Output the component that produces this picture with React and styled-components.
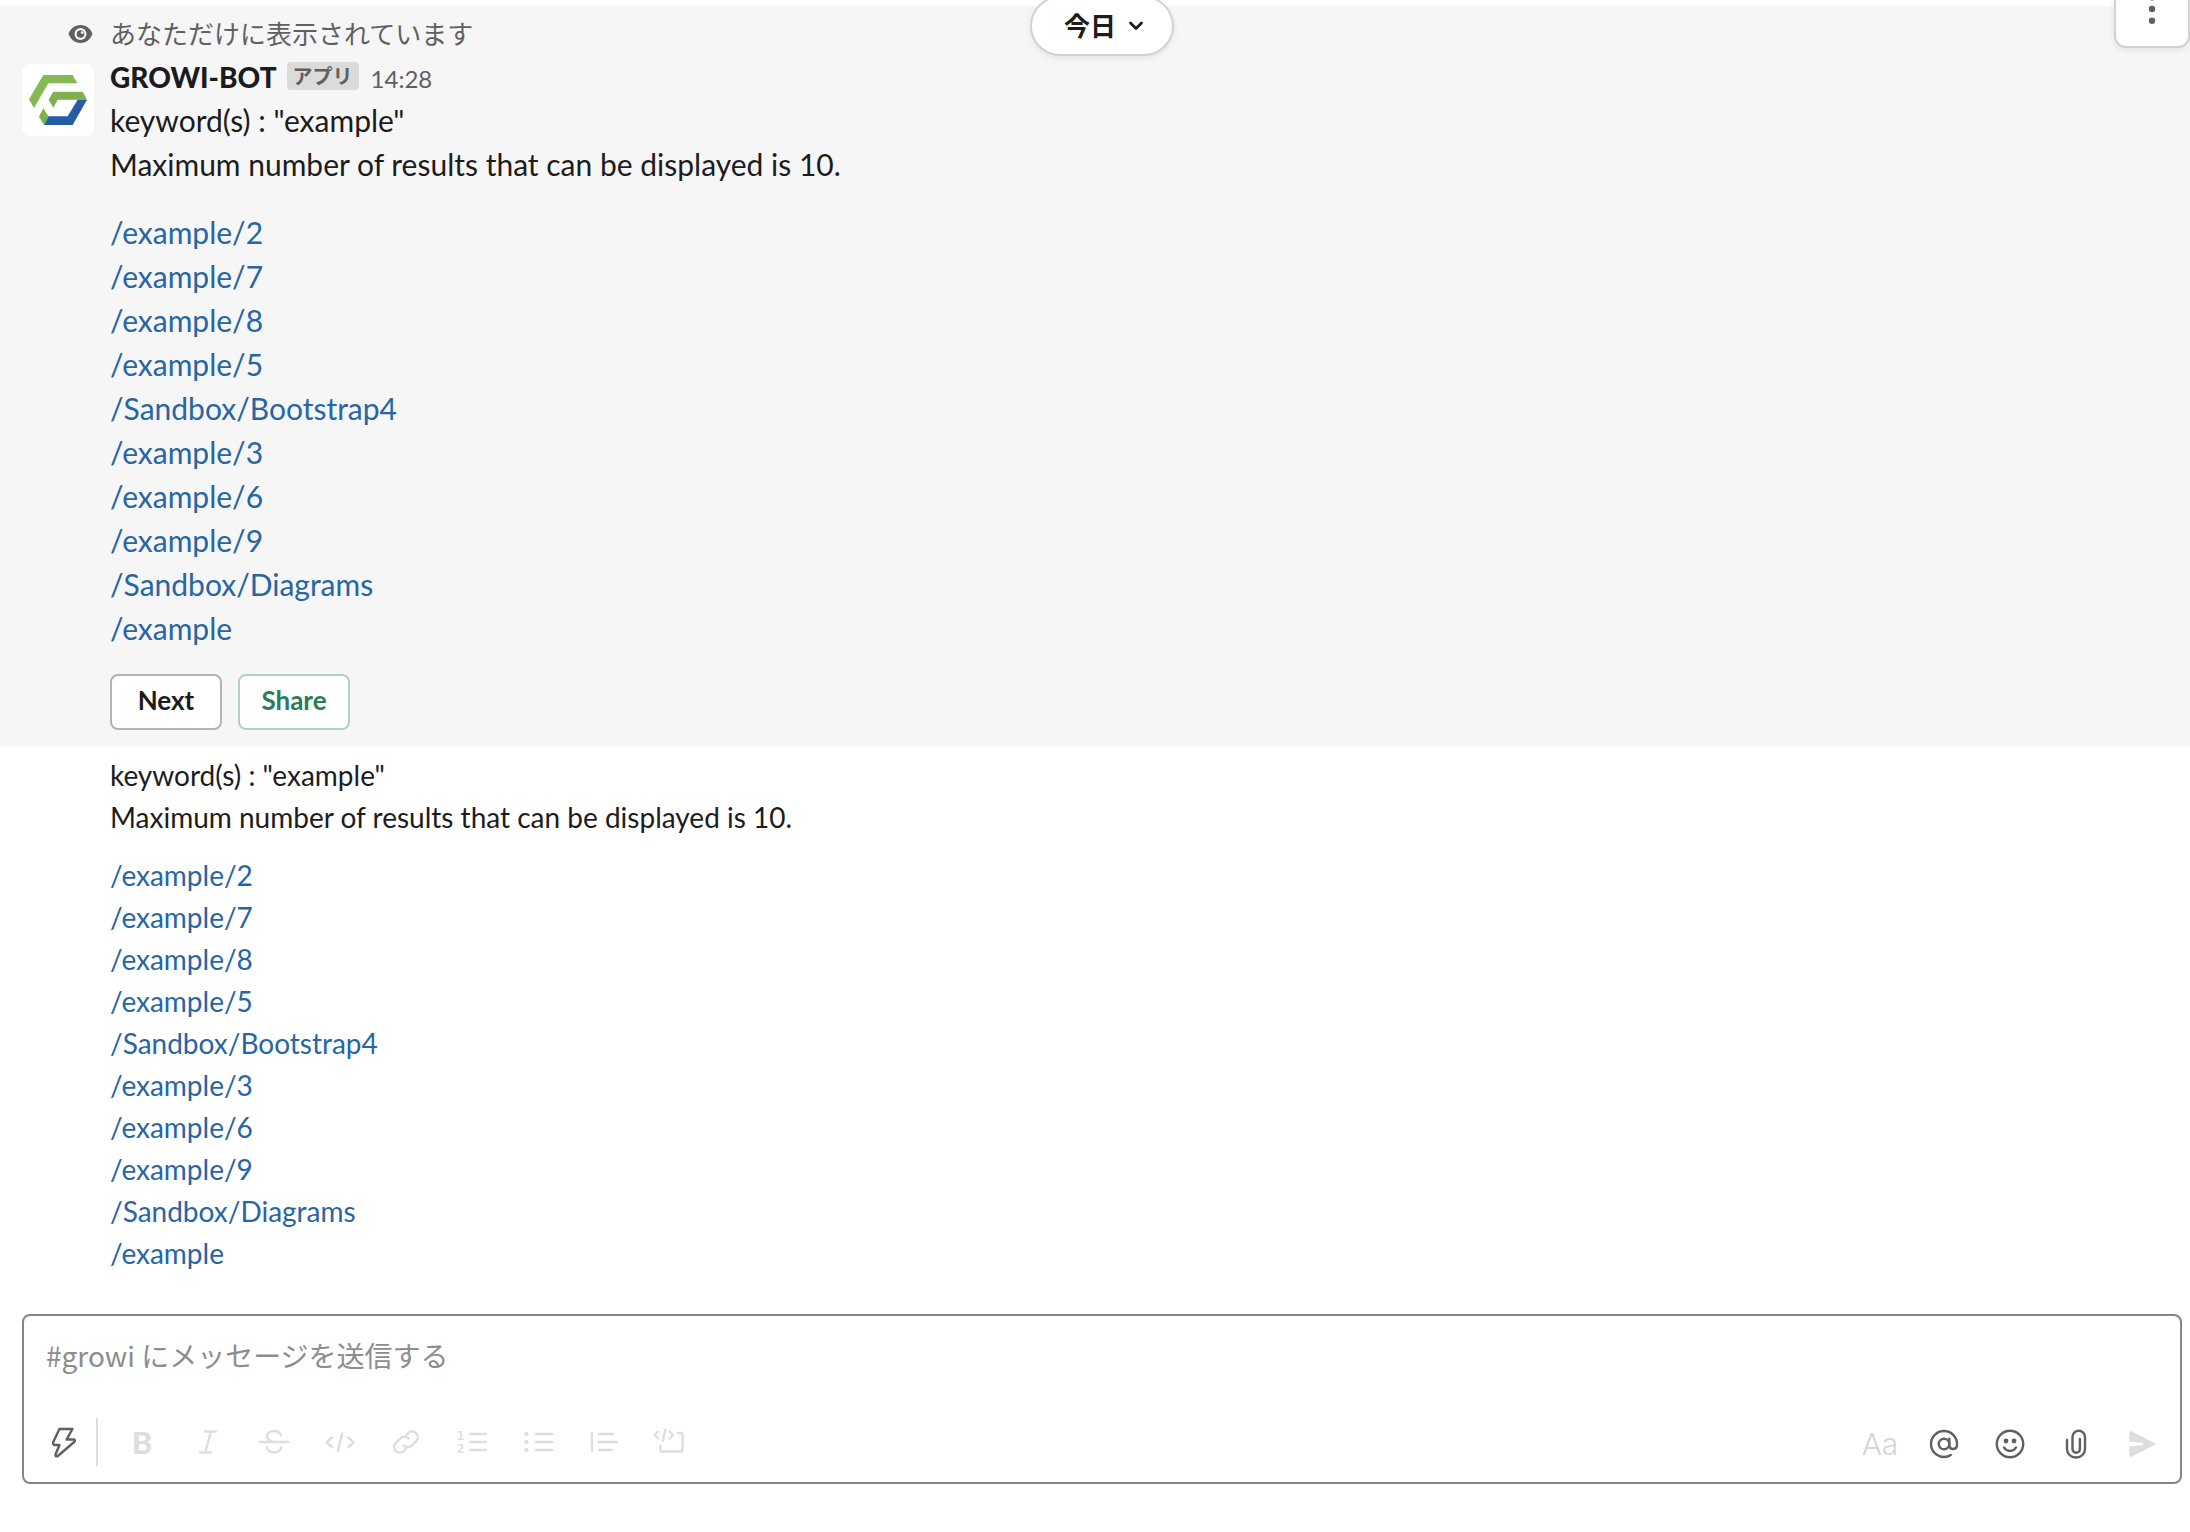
import React from "react";
import styled, { createGlobalStyle } from "styled-components";

const Global = createGlobalStyle`
  *, *::before, *::after { box-sizing: border-box; }
  body {
    margin: 0;
    background: #fff;
    color: #1d1c1d;
    font-family: Lato, "Noto Sans CJK JP", sans-serif;
    font-size: 30px;
    line-height: 44px;
  }
  button, input { font: inherit; }
`;

const Page = styled.main`
  position: relative;
  overflow: hidden;
  min-height: 100vh;
  padding-top: 6px;
`;

const DateAnchor = styled.div`
  position: absolute;
  top: -4px;
  left: 22px;
  right: 8px;
  display: flex;
  justify-content: center;
`;

const DatePill = styled.button`
  display: flex;
  align-items: center;
  justify-content: center;
  gap: 12px;
  height: 60px;
  padding: 0 28px 0 32px;
  border: 2px solid #d2d2d2;
  border-radius: 30px;
  background: #fff;
  color: #1d1c1d;
  font-size: 26px;
  font-weight: 700;
  line-height: 40px;
  box-shadow: 0 2px 6px rgba(0, 0, 0, 0.08);
`;

const MoreButton = styled.button`
  position: absolute;
  top: -30px;
  right: 0;
  display: flex;
  align-items: center;
  justify-content: center;
  width: 76px;
  height: 78px;
  padding: 0;
  border: 2px solid #d2d2d2;
  border-radius: 12px;
  background: #fff;
  color: #616061;
  box-shadow: 0 2px 6px rgba(0, 0, 0, 0.08);
`;

const Message = styled.article`
  display: grid;
  grid-template-columns: 72px minmax(0, 1fr);
  column-gap: 16px;
  padding: ${(p) => (p.$highlighted ? "8px 22px 16px" : "8px 22px 0")};
  background: ${(p) => (p.$highlighted ? "#f6f6f6" : "#fff")};
`;

const EyeCell = styled.div`
  display: flex;
  align-items: center;
  justify-content: flex-end;
  color: #616061;
`;

const Notice = styled.p`
  margin: 0;
  color: #616061;
  font-size: 26px;
  line-height: 40px;
`;

const Avatar = styled.div`
  width: 72px;
  height: 72px;
  margin-top: 10px;
  border-radius: 8px;
  background: #fff;
`;

const Body = styled.div`
  grid-column: 2;
  font-size: ${(p) => (p.$compact ? "28px" : "30px")};
  line-height: ${(p) => (p.$compact ? "42px" : "44px")};
`;

const Header = styled.header`
  display: flex;
  align-items: baseline;
  height: 44px;
  padding-top: 1px;
`;

const Name = styled.span`
  font-size: 28px;
  font-weight: 900;
`;

const Badge = styled.span`
  align-self: center;
  height: 28px;
  margin: 0 12px 2px 10px;
  padding: 0 6px;
  border-radius: 4px;
  background: #dbdbdb;
  color: #616061;
  font-size: 20px;
  font-weight: 700;
  line-height: 28px;
`;

const Time = styled.time`
  color: #616061;
  font-size: 24px;
`;

const Text = styled.p`
  margin: 0;
`;

const Results = styled.ul`
  margin: ${(p) => (p.$compact ? "16px" : "24px")} 0 0;
  padding: 0;
  list-style: none;
`;

const PageLink = styled.a`
  color: #2765a4;
  text-decoration: none;
`;

const Actions = styled.div`
  display: flex;
  gap: 16px;
  margin-top: 24px;
`;

const ActionButton = styled.button`
  width: 112px;
  height: 56px;
  padding: 0 0 4px;
  border: 2px solid ${(p) => (p.$primary ? "#afd0c5" : "#b3b3b3")};
  border-radius: 8px;
  background: #fff;
  color: ${(p) => (p.$primary ? "#2f7a5c" : "#1d1c1d")};
  font-size: 26px;
  font-weight: 700;
  line-height: 48px;
`;

const Composer = styled.form`
  margin: 40px 8px 0 22px;
  border: 2px solid #868686;
  border-radius: 8px;
  background: #fff;
`;

const MessageInput = styled.input`
  display: block;
  width: 100%;
  height: 78px;
  padding: 0 22px;
  border: 0;
  outline: 0;
  background: transparent;
  color: #1d1c1d;
  font-family: "Noto Sans CJK JP", sans-serif;
  font-size: 28px;
  &::placeholder {
    color: #8d8d8d;
    opacity: 1;
  }
`;

const Toolbar = styled.div`
  display: flex;
  align-items: flex-start;
  justify-content: space-between;
  padding: 18px 10px 8px 12px;
`;

const ToolGroup = styled.div`
  display: flex;
  align-items: center;
  gap: 10px;
  padding-top: ${(p) => (p.$end ? "2px" : "0")};
`;

const Divider = styled.span`
  width: 2px;
  height: 48px;
  margin: 0 6px 0 -6px;
  background: #dddddd;
`;

const ToolButton = styled.button`
  display: flex;
  align-items: center;
  justify-content: center;
  width: 56px;
  height: 60px;
  padding: 0;
  border: 0;
  background: transparent;
  color: ${(p) => (p.$active ? "#616061" : "#dedede")};
`;

const FormatLabel = styled.span`
  padding-left: 4px;
  font-family: Inter, sans-serif;
  font-size: 30px;
  font-weight: 300;
  color: #d6d6d6;
`;

const Digit = styled.text`
  fill: currentColor;
  stroke: none;
  font-family: "DejaVu Sans Mono", monospace;
  font-size: 12px;
  font-weight: 700;
`;

const BoldLetter = styled.span`
  font-size: 31px;
  font-weight: 900;
`;

const Svg = ({ size = 32, children, ...rest }) => (
  <svg
    width={size}
    height={size}
    viewBox={`0 0 ${size} ${size}`}
    overflow="visible"
    fill="none"
    stroke="currentColor"
    strokeWidth="2.4"
    strokeLinecap="round"
    strokeLinejoin="round"
    aria-hidden="true"
    {...rest}
  >
    {children}
  </svg>
);

const Logo = () => (
  <svg width="72" height="72" viewBox="66 192 216 216" aria-hidden="true">
    <path fill="#84ba53" d="M130 225H218L232 250H145L102 324L87 298Z" />
    <path fill="#7eb04e" d="M160 275H248L261 299H173L160 323L146 299Z" />
    <path fill="#7eb04e" d="M130 325L146 350L132 375L117 350Z" />
    <path fill="#265ba7" d="M233 299H261L218 375H132L146 349H203Z" />
  </svg>
);

const Eye = () => (
  <svg width="26" height="20" viewBox="0 0 26 20" aria-hidden="true">
    <path fill="currentColor" d="M12.500 1C6.500 1 2 5 .5 10c2 5 6 9 12 9s10-4 12-9C23 5 18.500 1 12.500 1Z" />
    <circle cx="12.500" cy="10" r="6" fill="#f6f6f6" />
    <circle cx="12.500" cy="10" r="3.800" fill="currentColor" />
    <circle cx="14.200" cy="8.600" r="1.400" fill="#f6f6f6" />
  </svg>
);

const Chevron = () => (
  <svg width="16" height="10" viewBox="0 0 16 10" fill="none" stroke="currentColor" strokeWidth="2.8" strokeLinecap="round" strokeLinejoin="round" aria-hidden="true">
    <path d="M2.5 2L8 7.5L13.5 2" />
  </svg>
);

const Dots = () => (
  <svg width="8" height="32" viewBox="0 0 8 32" fill="currentColor" aria-hidden="true">
    <circle cx="4" cy="4.3" r="3.2" />
    <circle cx="4" cy="16" r="3.2" />
    <circle cx="4" cy="27.7" r="3.2" />
  </svg>
);

const formatTools = [
  ["斜体", <path d="M13 5.5h11M8 26.5h11M19 5.5L13.2 26.5" />],
  ["取り消し線", <path d="M2 16h28M23 9.6C22 6.6 19.4 5 16 5c-4 0-7 2-7 5.2 0 2.6 1.8 4.2 5 5M9 21c.8 3.6 3.400 5.400 7 5.400 4 0 7-2 7-5" />],
  ["コード", <path d="M8 11.500L2.600 16.300L8 21.200M24.200 11.500L29.600 16.300L24.200 21.200M18.200 7.500L14 25" />],
  ["リンク", <path d="M13.600 19.600a5.600 5.600 0 0 0 8 0l5-5a5.700 5.700 0 0 0-8-8l-2.400 2.400M18.400 12.400a5.600 5.600 0 0 0-8 0l-5 5a5.700 5.700 0 0 0 8 8l2.400-2.400" />],
  ["番号付きリスト", <><path d="M14 8h16M14 16h16M14 24h16" /><Digit x="1" y="13.500">1</Digit><Digit x="1" y="27">2</Digit></>],
  ["箇条書き", <><path d="M14 8h16M14 16h16M14 24h16" /><path d="M4.500 8h.01M4.500 16h.01M4.500 24h.01" strokeWidth="4" /></>],
  ["引用", <path d="M4 7v18M11 8h14M11 16h17.500M11 24h12.500" />],
  ["コードブロック", <><path d="M24 7h3a1.500 1.500 0 0 1 1.500 1.500v15.500a1.500 1.500 0 0 1-1.500 1.500H8a1.500 1.500 0 0 1-1.500-1.500V20" /><path d="M4 5.500L.6 9L4 12.600M15.600 5.500L19 9L15.600 12.600M11.200 3.500L9 15" strokeWidth="2.200" /></>],
];

const pages = [
  "/example/2",
  "/example/7",
  "/example/8",
  "/example/5",
  "/Sandbox/Bootstrap4",
  "/example/3",
  "/example/6",
  "/example/9",
  "/Sandbox/Diagrams",
  "/example",
];

const SearchResult = ({ compact }) => (
  <>
    <Text>keyword(s) : "example"</Text>
    <Text>Maximum number of results that can be displayed is 10.</Text>
    <Results $compact={compact}>
      {pages.map((path) => (
        <li key={path}>
          <PageLink href={`#${path}`}>{path}</PageLink>
        </li>
      ))}
    </Results>
  </>
);

export default function App() {
  return (
    <>
      <Global />
      <Page>
        <Message $highlighted>
          <EyeCell>
            <Eye />
          </EyeCell>
          <Notice>あなただけに表示されています</Notice>
          <Avatar>
            <Logo />
          </Avatar>
          <Body>
            <Header>
              <Name>GROWI-BOT</Name>
              <Badge>アプリ</Badge>
              <Time>14:28</Time>
            </Header>
            <SearchResult />
            <Actions>
              <ActionButton type="button">Next</ActionButton>
              <ActionButton type="button" $primary>Share</ActionButton>
            </Actions>
          </Body>
        </Message>
        <Message>
          <Body $compact>
            <SearchResult compact />
          </Body>
        </Message>

        <DateAnchor>
          <DatePill type="button">
            今日
            <Chevron />
          </DatePill>
        </DateAnchor>
        <MoreButton type="button" aria-label="その他">
          <Dots />
        </MoreButton>

        <Composer onSubmit={(e) => e.preventDefault()}>
          <MessageInput type="text" aria-label="メッセージ" placeholder="#growi にメッセージを送信する" />
          <Toolbar>
            <ToolGroup>
              <ToolButton type="button" $active aria-label="ショートカット">
                <Svg>
                  <path d="M11.400 3H24.400L18.600 13.500H26.200Q27.600 14.500 26.200 16L9.800 30Q7 31 7.500 28.500L11.500 19H6Q4.600 18 5.200 16.200Z" />
                </Svg>
              </ToolButton>
              <Divider />
              <ToolButton type="button" aria-label="太字">
                <BoldLetter>B</BoldLetter>
              </ToolButton>
              {formatTools.map(([label, drawing]) => (
                <ToolButton key={label} type="button" aria-label={label}>
                  <Svg>{drawing}</Svg>
                </ToolButton>
              ))}
            </ToolGroup>
            <ToolGroup $end>
              <ToolButton type="button" aria-label="書式設定">
                <FormatLabel>Aa</FormatLabel>
              </ToolButton>
              <ToolButton type="button" $active aria-label="メンション">
                <Svg>
                  <circle cx="16" cy="16" r="5.300" />
                  <path d="M21.300 10.700V18a3.900 3.900 0 0 0 7.700-.8V16A13 13 0 1 0 16 29c2.600 0 4.800-.7 6.800-2" />
                </Svg>
              </ToolButton>
              <ToolButton type="button" $active aria-label="絵文字">
                <Svg>
                  <circle cx="16" cy="16" r="13.200" />
                  <path d="M12 13h.01M20 13h.01" strokeWidth="4.800" />
                  <path d="M10 19.500c1.500 2.600 3.600 3.500 6 3.500s4.500-.9 6-3.500" />
                </Svg>
              </ToolButton>
              <ToolButton type="button" $active aria-label="ファイルを添付">
                <Svg>
                  <path d="M7 12v9a8.500 8.500 0 0 0 8.500 8.500h1A8.500 8.500 0 0 0 25 21V9a6 6 0 0 0-12.500 0v12a3.700 3.700 0 0 0 7.400 0V11" />
                </Svg>
              </ToolButton>
              <ToolButton type="submit" aria-label="送信">
                <Svg fill="currentColor" stroke="none">
                  <path d="M3.300 4.700Q3.300 2.500 5.400 3.300L28 14.700Q30 16 28 17.300L5.400 28.800Q3.300 29.500 3.300 27.200V18.800L16.500 17Q18.500 16 16.500 15L3.300 13.500Z" />
                </Svg>
              </ToolButton>
            </ToolGroup>
          </Toolbar>
        </Composer>
      </Page>
    </>
  );
}
